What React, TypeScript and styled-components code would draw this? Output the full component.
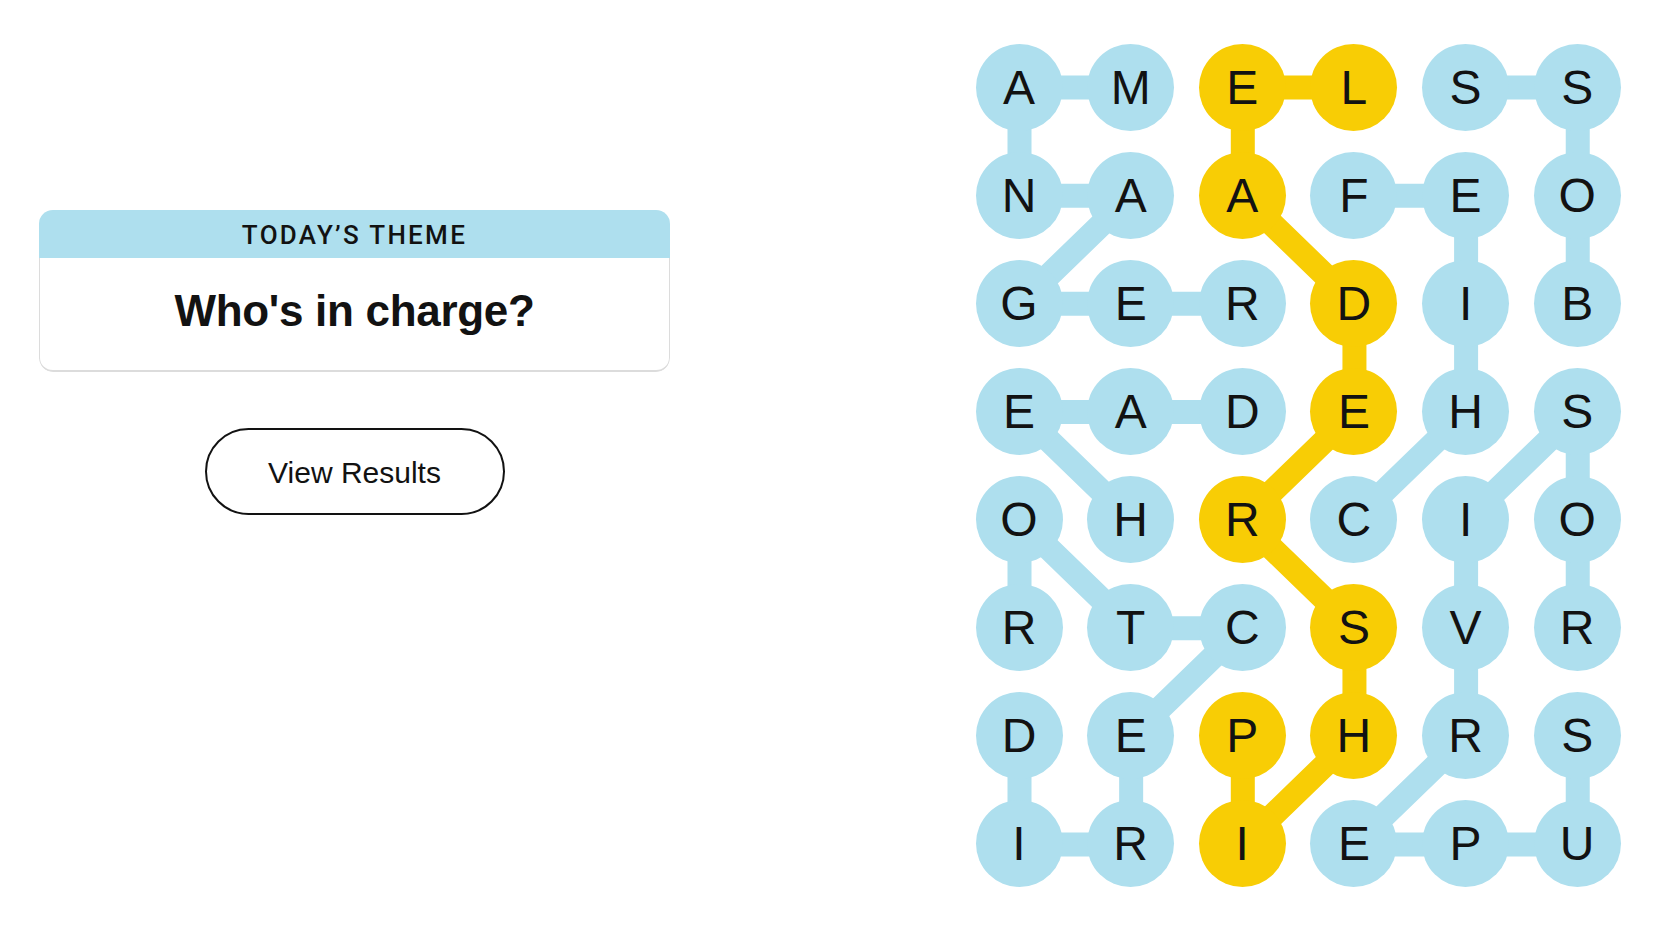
import React from "react";
import styled, { createGlobalStyle } from "styled-components";

const GlobalStyle = createGlobalStyle`
  html, body {
    margin: 0;
    padding: 0;
    background: #ffffff;
  }
  body {
    font-family: "Liberation Sans", Arial, sans-serif;
    color: #121212;
  }
  * { box-sizing: border-box; }
`;

const BLUE = "#aedfee";
const YELLOW = "#f8cd05";

const CELL = 87;
const COL_GAP = 24.65;
const ROW_GAP = 21.14;
const COL_PITCH = CELL + COL_GAP;
const ROW_PITCH = CELL + ROW_GAP;

const LETTERS = [
  "AMELSS",
  "NAAFEO",
  "GERDIB",
  "EADEHS",
  "OHRCIO",
  "RTCSVR",
  "DEPHRS",
  "IRIEPU",
];

type P = [number, number];

const SPANGRAM: P[] = [
  [0, 3], [0, 2], [1, 2], [2, 3], [3, 3], [4, 2], [5, 3], [6, 3], [7, 2], [6, 2],
];

const WORDS: P[][] = [
  [[0, 1], [0, 0], [1, 0], [1, 1], [2, 0], [2, 1], [2, 2]],
  [[2, 5], [1, 5], [0, 5], [0, 4]],
  [[4, 3], [3, 4], [2, 4], [1, 4], [1, 3]],
  [[4, 1], [3, 0], [3, 1], [3, 2]],
  [[6, 5], [7, 5], [7, 4], [7, 3], [6, 4], [5, 4], [4, 4], [3, 5], [4, 5], [5, 5]],
  [[6, 0], [7, 0], [7, 1], [6, 1], [5, 2], [5, 1], [4, 0], [5, 0]],
];

const isSpangram = (r: number, c: number) =>
  SPANGRAM.some(([a, b]) => a === r && b === c);

const Page = styled.div`
  display: flex;
  align-items: flex-start;
  width: 1663px;
  height: 936px;
  overflow: hidden;
`;

const LeftPanel = styled.section`
  width: 631px;
  margin-left: 39px;
  padding-top: 210px;
  display: flex;
  flex-direction: column;
  align-items: center;
`;

const ThemeCard = styled.div`
  width: 100%;
  border-radius: 14px;
  overflow: hidden;
  display: flex;
  flex-direction: column;
`;

const ThemeHeader = styled.div`
  height: 48px;
  background: ${BLUE};
  display: flex;
  align-items: center;
  justify-content: center;
  font-family: Roboto, "Liberation Sans", Arial, sans-serif;
  font-weight: 500;
  font-size: 26px;
  letter-spacing: 2.3px;
  text-transform: uppercase;
  color: #121212;
  padding-top: 2px;
`;

const ThemeBody = styled.div`
  height: 114px;
  border-style: solid;
  border-color: #dcdcdc;
  border-width: 0 1px 2px 1px;
  border-radius: 0 0 14px 14px;
  display: flex;
  align-items: center;
  justify-content: center;
  padding-bottom: 6px;
`;

const ThemeTitle = styled.h1`
  margin: 0;
  font-size: 44px;
  font-weight: 700;
  letter-spacing: -0.3px;
  color: #121212;
`;

const ViewButton = styled.button`
  margin-top: 56px;
  width: 300px;
  height: 87px;
  border: 2px solid #121212;
  border-radius: 44px;
  background: #ffffff;
  font-family: "Liberation Sans", Arial, sans-serif;
  font-size: 30px;
  color: #121212;
  cursor: pointer;
  padding: 3px 0 0 0;
`;

const Board = styled.section`
  position: relative;
  margin-left: 305.5px;
  margin-top: 43.5px;
`;

const Lines = styled.svg`
  position: absolute;
  left: 0;
  top: 0;
  z-index: 0;
  overflow: visible;
`;

const LetterGrid = styled.div`
  position: relative;
  z-index: 1;
  display: grid;
  grid-template-columns: repeat(6, ${CELL}px);
  grid-auto-rows: ${CELL}px;
  column-gap: ${COL_GAP}px;
  row-gap: ${ROW_GAP}px;
`;

const LetterCell = styled.div<{ $found: "theme" | "spangram" }>`
  width: ${CELL}px;
  height: ${CELL}px;
  border-radius: 50%;
  background: ${(p) => (p.$found === "spangram" ? YELLOW : BLUE)};
  display: flex;
  align-items: center;
  justify-content: center;
  font-size: 48px;
  line-height: 1;
  color: #121212;
  padding-top: 1px;
`;

const center = ([r, c]: P) => ({
  x: CELL / 2 + c * COL_PITCH,
  y: CELL / 2 + r * ROW_PITCH,
});

const Path = ({ pts, color }: { pts: P[]; color: string }) => (
  <polyline
    points={pts.map((p) => `${center(p).x},${center(p).y}`).join(" ")}
    fill="none"
    stroke={color}
    strokeWidth={24}
    strokeLinejoin="round"
  />
);

export default function App() {
  const w = 6 * CELL + 5 * COL_GAP;
  const h = 8 * CELL + 7 * ROW_GAP;
  return (
    <>
      <GlobalStyle />
      <Page>
        <LeftPanel>
          <ThemeCard>
            <ThemeHeader>Today’s Theme</ThemeHeader>
            <ThemeBody>
              <ThemeTitle>Who's in charge?</ThemeTitle>
            </ThemeBody>
          </ThemeCard>
          <ViewButton>View Results</ViewButton>
        </LeftPanel>
        <Board>
          <Lines width={w} height={h} viewBox={`0 0 ${w} ${h}`}>
            {WORDS.map((word, i) => (
              <Path key={i} pts={word} color={BLUE} />
            ))}
            <Path pts={SPANGRAM} color={YELLOW} />
          </Lines>
          <LetterGrid>
            {LETTERS.map((row, r) =>
              row.split("").map((ch, c) => (
                <LetterCell
                  key={`${r}-${c}`}
                  $found={isSpangram(r, c) ? "spangram" : "theme"}
                >
                  {ch}
                </LetterCell>
              ))
            )}
          </LetterGrid>
        </Board>
      </Page>
    </>
  );
}
